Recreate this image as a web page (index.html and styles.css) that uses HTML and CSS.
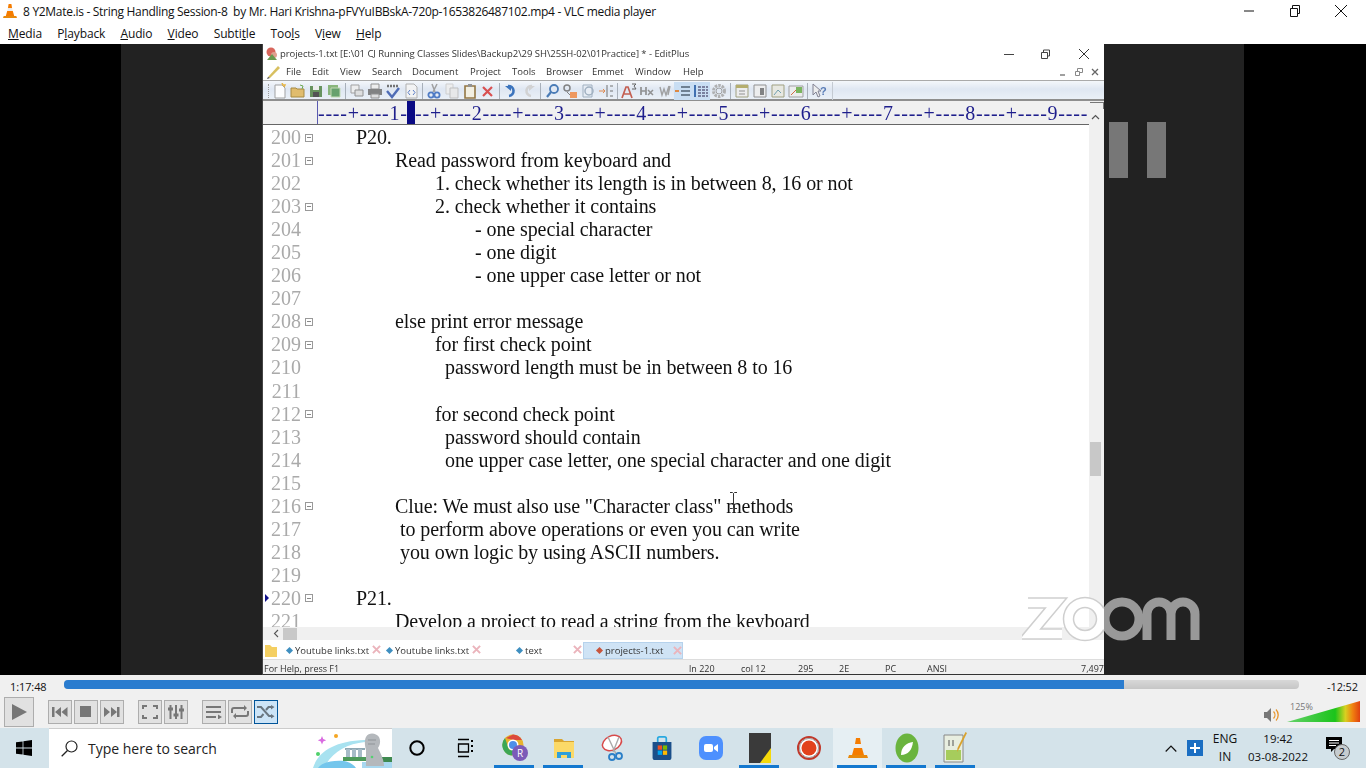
FILE: index.html
```html
<!DOCTYPE html>
<html lang="en">
<head>
<meta charset="utf-8">
<title>VLC media player</title>
<link rel="stylesheet" href="styles.css">
</head>
<body>
<svg class="defs" width="0" height="0" aria-hidden="true">
  <defs>
    <symbol id="cone" viewBox="0 0 20 22">
      <path d="M8 1h4l1 6H7z" fill="#f57c00"/><path d="M7 7h6l1 4H6z" fill="#eee"/><path d="M6 11h8l2 7H4z" fill="#f57c00"/><path d="M1 18h18l1 3H0z" fill="#e8890c"/>
    </symbol>
    <symbol id="tbx" viewBox="0 0 10 10"><path d="M1 1l8 8M9 1L1 9" stroke="#ebb4bc" stroke-width="2.200"/></symbol>
  </defs>
</svg>

<header class="titlebar">
  <svg class="vlc-small"><use href="#cone"/></svg>
  <span class="title-text">8 Y2Mate.is - String Handling Session-8&nbsp; by Mr. Hari Krishna-pFVYuIBBskA-720p-1653826487102.mp4 - VLC media player</span>
  <div class="winbtns">
    <svg width="16" height="16" viewBox="0 0 16 16"><path d="M3 8h10" stroke="#111"/></svg>
    <svg width="16" height="16" viewBox="0 0 16 16"><path d="M3.500 5.500h7v8h-7zM5.500 5.500v-3h7v8h-2" fill="none" stroke="#111"/></svg>
    <svg width="16" height="16" viewBox="0 0 16 16"><path d="M2 2l12 12M14 2L2 14" stroke="#111"/></svg>
  </div>
</header>
<nav class="menubar">
  <span><u>M</u>edia</span><span>P<u>l</u>ayback</span><span><u>A</u>udio</span><span><u>V</u>ideo</span><span>Subti<u>t</u>le</span><span>Too<u>l</u>s</span><span>V<u>i</u>ew</span><span><u>H</u>elp</span>
</nav>

<main class="video">
  <div class="bar-black left"></div>
  <div class="bar-dark left"></div>
  <section class="editplus">
    <div class="ep-title">
      <svg class="ep-logo" width="14" height="14" viewBox="0 0 14 14"><circle cx="6" cy="5" r="4.500" fill="#d8665c"/><circle cx="9" cy="8" r="3" fill="#e0a090"/><path d="M2 13l5-6 5 6z" fill="#6a9a50"/></svg>
      <span class="ep-title-text">projects-1.txt [E:\01 CJ Running Classes Slides\Backup2\29 SH\25SH-02\01Practice] * - EditPlus</span>
      <div class="ep-winbtns">
        <svg width="14" height="14" viewBox="0 0 14 14"><path d="M1 7.500h10" stroke="#444"/></svg>
        <svg width="14" height="14" viewBox="0 0 14 14"><path d="M2.500 5.500h6v6h-6zM4.500 5V3h6v6H9" fill="none" stroke="#444"/></svg>
        <svg width="14" height="14" viewBox="0 0 14 14"><path d="M2 2l10 10M12 2L2 12" stroke="#333"/></svg>
      </div>
    </div>
    <div class="ep-menu">
      <svg class="ep-pencil" width="15" height="15" viewBox="0 0 15 15"><path d="M2 13L12 2l2 2L4 14z" fill="#d8c060"/><path d="M2 13l-1 2 3-1z" fill="#444"/></svg>
      <span class="m-file">File</span><span class="m-edit">Edit</span><span class="m-view">View</span><span class="m-search">Search</span><span class="m-doc">Document</span><span class="m-proj">Project</span><span class="m-tools">Tools</span><span class="m-brow">Browser</span><span class="m-emm">Emmet</span><span class="m-win">Window</span><span class="m-help">Help</span>
      <div class="ep-mdi">
        <svg width="10" height="10" viewBox="0 0 10 10"><path d="M2 8h5" stroke="#777" stroke-width="1.400"/></svg>
        <svg width="10" height="10" viewBox="0 0 10 10"><path d="M1.500 4.500h4v4h-4zM3.500 4V1.500h5v4H6" fill="none" stroke="#888"/></svg>
        <svg width="10" height="10" viewBox="0 0 10 10"><path d="M2 2l6 6M8 2L2 8" stroke="#666" stroke-width="1.300"/></svg>
      </div>
    </div>
    <div class="ep-toolbar">
      <div class="grip"></div>
      <svg class="tool" viewBox="0 0 16 16"><path d="M3 2h7l3 3v10H3z" fill="#fff" stroke="#999"/><path d="M10 0l1 2 2 0-1 2" stroke="#e8b030" fill="none" stroke-width="1.500"/></svg>
      <svg class="tool" viewBox="0 0 16 16"><path d="M1 5h5l1 1h7v8H1z" fill="#e0b860" stroke="#a08030"/><path d="M10 2l3 1-1 3" stroke="#60a040" fill="none"/></svg>
      <svg class="tool" viewBox="0 0 16 16"><path d="M2 3h12v11H2z" fill="#5a8a50"/><path d="M5 3h6v4H5z" fill="#eee"/><path d="M5 9h6v5H5z" fill="#444"/></svg>
      <svg class="tool" viewBox="0 0 16 16"><path d="M2 2h10v10H2z" fill="#80b070"/><path d="M5 5h9v9H5z" fill="#5a9a60" stroke="#c0d8b0"/></svg>
      <i class="sep"></i>
      <svg class="tool" viewBox="0 0 16 16"><path d="M2 2h8v8H2z" fill="#eee" stroke="#999"/><path d="M6 7h8v6H6z" fill="#ddd" stroke="#888"/></svg>
      <svg class="tool" viewBox="0 0 16 16"><path d="M4 1h8v5H4z" fill="#eee" stroke="#888"/><path d="M1 6h14v6H1z" fill="#777"/><path d="M4 11h8v4H4z" fill="#ddd" stroke="#888"/></svg>
      <svg class="tool" viewBox="0 0 16 16"><path d="M2 8l5 6 7-9" fill="none" stroke="#4060b0" stroke-width="2.400"/><path d="M2 3h12" stroke="#666" stroke-width="2.500" stroke-dasharray="2 1"/></svg>
      <svg class="tool" viewBox="0 0 16 16"><path d="M3 1h8l3 3v11H3z" fill="#f4f4f4" stroke="#aaa"/><path d="M7 7L5 9.500 7 12M10 7l2 2.500L10 12" fill="none" stroke="#4a70c0"/></svg>
      <i class="sep"></i>
      <svg class="tool" viewBox="0 0 16 16"><path d="M11 1L7 9M6 1l3 8" stroke="#999" stroke-width="1.500"/><circle cx="5" cy="12" r="2.600" fill="none" stroke="#4070c0" stroke-width="1.800"/><circle cx="11" cy="12" r="2.600" fill="none" stroke="#4070c0" stroke-width="1.800"/></svg>
      <svg class="tool" viewBox="0 0 16 16"><path d="M2 1h7v10H2z" fill="#eee" stroke="#ccc"/><path d="M6 5h8v10H6z" fill="#e8e8e8" stroke="#bbb"/></svg>
      <svg class="tool" viewBox="0 0 16 16"><path d="M3 3h10v12H3z" fill="#f4f0e0" stroke="#8a6a30" stroke-width="1.600"/><path d="M6 1h4v3H6z" fill="#888"/></svg>
      <svg class="tool" viewBox="0 0 16 16"><path d="M3 4l9 9M12 4l-9 9" stroke="#d84040" stroke-width="2.200"/></svg>
      <i class="sep"></i>
      <svg class="tool" viewBox="0 0 16 16"><path d="M5 3a5 5 0 1 1 1 10" fill="none" stroke="#2a68b8" stroke-width="2.600"/><path d="M2 3h6v5z" fill="#2a68b8"/></svg>
      <svg class="tool" viewBox="0 0 16 16"><path d="M11 3a5 5 0 1 0-1 10" fill="none" stroke="#d0d0d0" stroke-width="2.600"/><path d="M14 3H8v5z" fill="#d0d0d0"/></svg>
      <i class="sep"></i>
      <svg class="tool" viewBox="0 0 16 16"><circle cx="10" cy="6" r="4" fill="none" stroke="#3a70b0" stroke-width="1.800"/><path d="M7 9l-4 5" stroke="#3a70b0" stroke-width="2.200"/></svg>
      <svg class="tool" viewBox="0 0 16 16"><circle cx="5" cy="5" r="3" fill="none" stroke="#777" stroke-width="1.500"/><path d="M5 9l3 3" stroke="#777"/><rect x="8" y="9" width="7" height="6" fill="#f09050"/></svg>
      <svg class="tool" viewBox="0 0 16 16"><path d="M3 2h9v12H3z" fill="#e8eef6" stroke="#9ab"/><circle cx="9" cy="8" r="4" fill="none" stroke="#9ab" stroke-width="1.500"/></svg>
      <svg class="tool" viewBox="0 0 16 16"><path d="M1 8h6M5 6l2 2-2 2" stroke="#e08040" fill="none"/><path d="M9 2v12M12 3h3M12 8h3M12 13h3" stroke="#666"/></svg>
      <i class="sep"></i>
      <svg class="tool" viewBox="0 0 16 16"><path d="M1 15L5 4h2l4 11M3 11h6" fill="none" stroke="#c05040" stroke-width="1.700"/><path d="M11 1h4l-2 2 2 3h-4" fill="none" stroke="#555"/></svg>
      <svg class="tool" viewBox="0 0 16 16"><path d="M2 4v8M7 4v8M2 8h5" stroke="#888" stroke-width="1.700"/><path d="M9 7l5 5M14 7l-5 5" stroke="#888" stroke-width="1.500"/></svg>
      <svg class="tool" viewBox="0 0 16 16"><path d="M3 4l2 8 2-6 2 6 3-9M13 3l-2 9" fill="none" stroke="#999" stroke-width="1.400"/></svg>
      <div class="tool-on">
        <svg class="tool" viewBox="0 0 16 16"><path d="M6 4h9M6 8h9M6 12h9" stroke="#456" stroke-width="1.600"/><path d="M0 8h4" stroke="#e08030" stroke-width="2"/></svg>
        <svg class="tool" viewBox="0 0 16 16"><path d="M2 2v12" stroke="#36a" stroke-width="2"/><path d="M5 4h10M5 7h10M5 10h10M5 13h10" stroke="#557" stroke-width="1.700" stroke-dasharray="3 1"/></svg>
      </div>
      <svg class="tool" viewBox="0 0 16 16"><circle cx="8" cy="8" r="5.500" fill="none" stroke="#aaa" stroke-width="3" stroke-dasharray="2.500 1"/><circle cx="8" cy="8" r="3" fill="none" stroke="#999"/></svg>
      <i class="sep"></i>
      <svg class="tool" viewBox="0 0 16 16"><path d="M2 2h12v12H2z" fill="#eee" stroke="#997"/><path d="M2 2h12v3H2z" fill="#b0a860"/><path d="M5 8h6M5 11h6" stroke="#888"/></svg>
      <svg class="tool" viewBox="0 0 16 16"><path d="M2 2h12v12H2z" fill="#eee" stroke="#888"/><path d="M8 5h4v7H8z" fill="#777"/></svg>
      <svg class="tool" viewBox="0 0 16 16"><path d="M2 2h12v12H2z" fill="#e8e8e0" stroke="#997"/><path d="M4 12l4-5 3 3" fill="none" stroke="#69a"/></svg>
      <svg class="tool" viewBox="0 0 16 16"><path d="M1 3h14v11H1z" fill="#eee" stroke="#999"/><path d="M8 4h6v6H8z" fill="#70b050"/><path d="M3 12l5-5" stroke="#d06030"/></svg>
      <i class="sep"></i>
      <svg class="tool" viewBox="0 0 16 16"><path d="M2 1v11l3-3 2 5 2-1-2-5h3z" fill="#eee" stroke="#778"/><text class="help-q" x="9" y="12">?</text></svg>
      <i class="sep last"></i>
    </div>

    <div class="ep-body">
      <div class="ep-main">
        <div class="ruler"><span class="ruler-text">----+----1----+----2----+----3----+----4----+----5----+----6----+----7----+----8----+----9----</span><i class="ruler-caret"></i></div>
        <div class="code">
          <div class="line"><span class="num">200</span><i class="fold"></i><span class="t i0">P20.</span></div>
          <div class="line"><span class="num">201</span><i class="fold"></i><span class="t i1">Read password from keyboard and</span></div>
          <div class="line"><span class="num">202</span><span class="t i2">1. check whether its length is in between 8, 16 or not</span></div>
          <div class="line"><span class="num">203</span><i class="fold"></i><span class="t i2">2. check whether it contains</span></div>
          <div class="line"><span class="num">204</span><span class="t i4">- one special character</span></div>
          <div class="line"><span class="num">205</span><span class="t i4">- one digit</span></div>
          <div class="line"><span class="num">206</span><span class="t i4">- one upper case letter or not</span></div>
          <div class="line"><span class="num">207</span></div>
          <div class="line"><span class="num">208</span><i class="fold"></i><span class="t i1">else print error message</span></div>
          <div class="line"><span class="num">209</span><i class="fold"></i><span class="t i2">for first check point</span></div>
          <div class="line"><span class="num">210</span><span class="t i3">password length must be in between 8 to 16</span></div>
          <div class="line"><span class="num">211</span></div>
          <div class="line"><span class="num">212</span><i class="fold"></i><span class="t i2">for second check point</span></div>
          <div class="line"><span class="num">213</span><span class="t i3">password should contain</span></div>
          <div class="line"><span class="num">214</span><span class="t i3">one upper case letter, one special character and one digit</span></div>
          <div class="line"><span class="num">215</span></div>
          <div class="line"><span class="num">216</span><i class="fold"></i><span class="t i1">Clue: We must also use "Character class" methods</span></div>
          <div class="line"><span class="num">217</span><span class="t i5">to perform above operations or even you can write</span></div>
          <div class="line"><span class="num">218</span><span class="t i5">you own logic by using ASCII numbers.</span></div>
          <div class="line"><span class="num">219</span></div>
          <div class="line"><i class="marker"></i><span class="num">220</span><i class="fold"></i><span class="t i0">P21.</span></div>
          <div class="line"><span class="num">221</span><span class="t i1">Develop a project to read a string from the keyboard</span></div>
          <svg class="ibeam" width="9" height="17" viewBox="0 0 9 17"><path d="M1 .5h2.500l1 1 1-1H8M4.500 1.500v14M1 16.500h2.500l1-1 1 1H8" fill="none" stroke="#333"/></svg>
        </div>
      </div>
      <div class="vscroll">
        <i class="corner"></i>
        <svg class="up" width="9" height="6" viewBox="0 0 9 6"><path d="M1 5l3.500-3.500L8 5" fill="none" stroke="#555" stroke-width="1.200"/></svg>
        <i class="thumb"></i>
      </div>
    </div>
    <div class="hscroll">
      <svg width="6" height="9" viewBox="0 0 6 9"><path d="M5 1L1.500 4.500 5 8" fill="none" stroke="#555" stroke-width="1.100"/></svg>
      <i class="hthumb"></i>
      <svg class="right" width="6" height="9" viewBox="0 0 6 9"><path d="M1 1l3.500 3.500L1 8" fill="none" stroke="#777" stroke-width="1.100"/></svg>
    </div>
    <div class="tabs">
      <svg class="folder" width="12" height="13" viewBox="0 0 12 13"><path d="M0 1h5l2 2h5v10H0z" fill="#f4cf62"/></svg>
      <div class="tab t1"><i class="dia"></i><span>Youtube links.txt</span><svg class="tx"><use href="#tbx"/></svg></div>
      <div class="tab t2"><i class="dia"></i><span>Youtube links.txt</span><svg class="tx"><use href="#tbx"/></svg></div>
      <div class="tab t3"><i class="dia"></i><span>text</span><svg class="tx"><use href="#tbx"/></svg></div>
      <div class="tab t4 on"><i class="dia red"></i><span>projects-1.txt</span><svg class="tx"><use href="#tbx"/></svg></div>
    </div>
    <div class="ep-status">
      <span class="s-help">For Help, press F1</span>
      <span class="s-ln">ln 220</span><span class="s-col">col 12</span><span class="s-n">295</span><span class="s-hex">2E</span><span class="s-pc">PC</span><span class="s-ansi">ANSI</span><span class="s-size">7,497</span>
    </div>
  </section>
  <div class="bar-dark right"></div>
  <div class="bar-black right"></div>

  <i class="pause p1"></i><i class="pause p2"></i>
  <svg class="zoomlogo" width="180" height="48" viewBox="0 0 180 48" aria-label="zoom">
    <defs>
      <clipPath id="zl"><rect x="0" y="0" width="82" height="48"/></clipPath>
      <clipPath id="zr"><rect x="82" y="0" width="98" height="48"/></clipPath>
    </defs>
    <g clip-path="url(#zl)" fill="none">
      <g stroke="#cfcfcf" stroke-width="11.500"><path d="M6 7h28L8 38h32"/><circle cx="63" cy="23" r="16.500"/><circle cx="100" cy="23" r="17"/></g>
      <g stroke="#fff" stroke-width="8.500"><path d="M6 7h28L8 38h32"/><circle cx="63" cy="23" r="16.500"/><circle cx="100" cy="23" r="17"/></g>
    </g>
    <g clip-path="url(#zr)" fill="none" stroke="#999" stroke-width="9">
      <circle cx="100" cy="23" r="17"/>
      <path d="M125 44V18a10 10 0 0 1 24 0v26M149 18a10 10 0 0 1 24 0v26"/>
    </g>
  </svg>
</main>

<section class="controls">
  <div class="seekrow">
    <span class="time">1:17:48</span>
    <div class="seek"><div class="seek-fill"></div></div>
    <span class="time remain">-12:52</span>
  </div>
  <div class="btnrow">
    <button class="btn big"><svg width="18" height="18" viewBox="0 0 18 18"><path d="M2 1l15 8-15 8z" fill="#777"/></svg></button>
    <div class="group g1">
      <button class="btn"><svg width="16" height="12" viewBox="0 0 16 12"><path d="M0 1h2.500v10H0zM9 1v10L3 6zM15.500 1v10l-6-5z" fill="#777"/></svg></button>
      <button class="btn"><svg width="12" height="12" viewBox="0 0 12 12"><rect width="11" height="11" fill="#777"/></svg></button>
      <button class="btn"><svg width="16" height="12" viewBox="0 0 16 12"><path d="M0 1v10l6-5zM7 1v10l6-5zM13 1h2.500v10H13z" fill="#777"/></svg></button>
    </div>
    <div class="group g2">
      <button class="btn"><svg width="16" height="14" viewBox="0 0 16 14" fill="none" stroke="#777" stroke-width="2"><path d="M1 4V1h4M11 1h4v3M15 10v3h-4M5 13H1v-3"/></svg></button>
      <button class="btn"><svg width="16" height="14" viewBox="0 0 16 14" fill="none" stroke="#777" stroke-width="2"><path d="M2.500 0v14M8 0v14M13.500 0v14"/><path d="M0 4h5M5.500 10h5M11 5h5" stroke-width="3"/></svg></button>
    </div>
    <div class="group g3">
      <button class="btn"><svg width="16" height="14" viewBox="0 0 16 14"><path d="M0 1h15v2H0zM0 6h15v2H0zM0 11h10v2H0zM12 9.500l4 2.500-4 2.500z" fill="#777"/></svg></button>
      <button class="btn"><svg width="18" height="14" viewBox="0 0 18 14" fill="none" stroke="#777" stroke-width="2"><path d="M1 8V5a2 2 0 0 1 2-2h11M17 6v3a2 2 0 0 1-2 2H4"/><path d="M13 0l3 3-3 3zM5 8l-3 3 3 3z" fill="#777" stroke="none"/></svg></button>
      <button class="btn sel"><svg width="18" height="14" viewBox="0 0 18 14" fill="none" stroke="#6a7680" stroke-width="2"><path d="M0 2h4l8 9h3M0 12h4l2.500-3M9 5l2.500-3H15"/><path d="M14 0v4.500l3.500-2.500zM14 9v4.500l3.500-2.300z" fill="#6a7680" stroke="none"/></svg></button>
    </div>
    <div class="volume">
      <svg width="17" height="14" viewBox="0 0 17 14"><path d="M0 4h3l4-4v14l-4-4H0z" fill="#777"/><path d="M9.500 3.500a5 5 0 0 1 0 7M12 1.500a8 8 0 0 1 0 11" fill="none" stroke="#e8962c" stroke-width="1.300"/></svg>
      <div class="vol-meter"><span class="vol-label">125%</span><i class="vol-shape"></i></div>
    </div>
  </div>
</section>

<footer class="taskbar">
  <svg class="winlogo" width="16" height="16" viewBox="0 0 16 16"><path d="M0 2.300l6.600-.9v6.200H0zM7.400 1.300L16 0v7.600H7.400zM0 8.400h6.600v6.200L0 13.700zM7.400 8.400H16V16l-8.600-1.200z" fill="#000"/></svg>
  <div class="search">
    <svg width="17" height="17" viewBox="0 0 17 17"><circle cx="10.500" cy="6.500" r="5.500" fill="none" stroke="#222" stroke-width="1.200"/><path d="M6.500 10.500L.7 16.300" stroke="#222" stroke-width="1.300"/></svg>
    <span>Type here to search</span>
    <svg class="promo" width="82" height="39" viewBox="0 1 82 39">
      <path d="M12 8l1.200 3 3 1.200-3 1.200L12 16.500l-1.200-3-3-1.200 3-1.200z" fill="#d96be0"/>
      <circle cx="26" cy="8" r="2" fill="#f5a623"/><circle cx="8" cy="26" r="2" fill="#4fd06b"/>
      <path d="M3 40C8 24 24 13 55 12v2C36 16 22 24 14 40z" fill="#a8e2f0"/>
      <path d="M8 40c4-6 16-8 26-7 6 1 10 4 12 7z" fill="#74c6ec"/>
      <path d="M35 20h20v2H35z" fill="#8fa8b4"/>
      <path d="M36 21h4v9h-4zM42 21h4v9h-4zM48 21h4v9h-4z" fill="#a7bcc8"/>
      <path d="M33 29h26v4H33z" fill="#4d9a5a"/>
      <path d="M72 29h10v5H72z" fill="#3f8a50"/>
      <path d="M52 40h30v-6H52z" fill="#a8d8f0"/>
      <path d="M56 38V22c-1-4-2-9 0-13 3-5 10-4 13 0 2 4 1 8-1 11 3 6 6 12 6 18z" fill="#b4b8bc"/>
      <path d="M58 12h8M58 16h7" stroke="#8f9498"/>
      <circle cx="62" cy="29" r="1.300" fill="#55d070"/>
    </svg>
  </div>
  <div class="tasks">
    <div class="task"><svg width="20" height="20" viewBox="0 0 20 20"><circle cx="10" cy="10" r="6.700" fill="none" stroke="#000" stroke-width="2"/></svg></div>
    <div class="task"><svg width="18" height="20" viewBox="0 0 18 20" fill="none" stroke="#000" stroke-width="1.300"><path d="M1 1.500h11M1 18.500h11M1.500 6h10v8h-10z"/><path d="M15 2v2M15 7v2M15 12v2" stroke-width="2"/></svg></div>
    <div class="task open"><svg width="28" height="30" viewBox="0 0 28 30"><circle cx="12" cy="12" r="10.500" fill="#e8b32e"/><path d="M12 1.500a10.500 10.500 0 0 1 9 5.500H12L5 5z" fill="#dc4a3c"/><path d="M4 5a10.500 10.500 0 0 0 7 17.500l4-6H8z" fill="#3da754"/><circle cx="12" cy="12" r="5.500" fill="#fff"/><circle cx="12" cy="12" r="4" fill="#4e8fe8"/><circle cx="19" cy="20" r="8" fill="#7c5bb8"/><text class="avatar" x="19" y="24">R</text></svg></div>
    <div class="task open"><svg width="22" height="20" viewBox="0 0 22 20"><path d="M1 1h8l2 2h10v17H1z" fill="#d9a530"/><path d="M1 4h20v16H1z" fill="#fbd968"/><path d="M4 14h14v6h-4v-3H8v3H4z" fill="#2f9fdc"/></svg></div>
    <div class="task"><svg width="26" height="28" viewBox="0 0 26 28"><ellipse cx="12" cy="9" rx="10" ry="7" fill="#fff" stroke="#d84a4a" stroke-width="1.500" transform="rotate(-25 12 9)"/><path d="M8 3l8 17M19 3l-6 15" stroke="#aaa" stroke-width="1.400"/><circle cx="12" cy="23" r="3" fill="none" stroke="#2a7fc8" stroke-width="1.800"/><circle cx="19" cy="22" r="3" fill="none" stroke="#2a7fc8" stroke-width="1.800"/></svg></div>
    <div class="task"><svg width="24" height="24" viewBox="0 0 24 28"><path d="M7 7V3a2 2 0 0 1 2-2h6a2 2 0 0 1 2 2v4" fill="none" stroke="#29a9e0" stroke-width="2"/><path d="M1 7h22v18a3 3 0 0 1-3 3H4a3 3 0 0 1-3-3z" fill="#1b4f8a"/><rect x="7" y="11" width="5" height="5" fill="#f25022"/><rect x="13" y="11" width="5" height="5" fill="#7fba00"/><rect x="7" y="17" width="5" height="5" fill="#00a4ef"/><rect x="13" y="17" width="5" height="5" fill="#ffb900"/></svg></div>
    <div class="task"><svg width="24" height="24" viewBox="0 0 24 24"><rect width="24" height="24" rx="7" fill="#4d90fe"/><rect x="5" y="8" width="9" height="8" rx="2" fill="#fff"/><path d="M15 11l4-3v8l-4-3z" fill="#fff"/></svg></div>
    <div class="task open"><svg width="22" height="30" viewBox="0 0 22 30"><rect width="22" height="30" fill="#3a3a3a"/><path d="M22 15v15H11z" fill="#f5d90a"/></svg></div>
    <div class="task"><svg width="24" height="26" viewBox="0 0 24 26"><circle cx="12" cy="13" r="11" fill="#fff" stroke="#c0392b" stroke-width="2"/><circle cx="12" cy="13" r="7.500" fill="#e2421c"/><circle cx="12" cy="13" r="9.500" fill="none" stroke="#999"/></svg></div>
    <div class="task active open"><svg width="20" height="30" viewBox="0 0 20 22"><use href="#cone"/></svg></div>
    <div class="task open"><svg width="24" height="30" viewBox="0 0 24 30"><ellipse cx="12" cy="15" rx="11.500" ry="14.500" fill="#6ab43e"/><path d="M6 22c0-8 5-12 12-13-1 8-5 13-12 13z" fill="#fff"/></svg></div>
    <div class="task open"><svg width="26" height="32" viewBox="0 0 26 32"><path d="M1 3h19v27H1z" fill="#e8eee0" stroke="#888"/><path d="M3 18h15v10H3z" fill="#a6cc5c"/><path d="M6 8v6M10 8v6" stroke="#555"/><path d="M24 1l-8 16-2 3 .5-4 8-16z" fill="#d9a22c"/></svg></div>
  </div>
  <div class="tray">
    <svg class="caret" width="12" height="7" viewBox="0 0 12 7"><path d="M.7 6.500L6 1l5.300 5.500" fill="none" stroke="#111" stroke-width="1.200"/></svg>
    <div class="plus"><svg width="10" height="10" viewBox="0 0 10 10"><path d="M5 0v10M0 5h10" stroke="#fff" stroke-width="2"/></svg></div>
    <div class="lang"><span>ENG</span><span>IN</span></div>
    <div class="clock"><span>19:42</span><span>03-08-2022</span></div>
    <div class="notif">
      <svg width="16" height="15" viewBox="0 0 16 15"><path d="M0 0h16v12H8l-3 3v-3H0z" fill="#000"/><path d="M3 3.500h10M3 6h10M3 8.500h7" stroke="#fff"/></svg>
      <span class="badge">2</span>
    </div>
  </div>
</footer>
</body>
</html>
```

FILE: styles.css
```css
* { box-sizing: border-box; }
html, body { margin: 0; padding: 0; }
body {
  width: 1366px; height: 768px; overflow: hidden; background: #fff;
  font-family: "Open Sans", "Noto Sans", sans-serif; color: #111;
  position: relative;
}
.defs { position: absolute; }
i { display: block; }

/* VLC window chrome */
.titlebar { height: 22px; display: flex; align-items: center; background: #fff; padding-left: 3px; }
.vlc-small { width: 14px; height: 16px; flex: none; margin-right: 6px; }
.title-text { font-size: 12px; letter-spacing: -.3px; white-space: nowrap; }
.winbtns { margin-left: auto; display: flex; gap: 30px; padding-right: 17px; }
.winbtns svg { display: block; }
.menubar { height: 22px; display: flex; align-items: center; padding-left: 8px; gap: 15.200px; font-size: 12px; background: #fff; letter-spacing: -.01em; }

/* Video */
.video { height: 631px; display: flex; background: #000; position: relative; }
.bar-black.left { width: 121px; }
.bar-black.right { width: 122px; }
.bar-dark { background: #222; }
.bar-dark.left { width: 141px; }
.bar-dark.right { width: 140px; }
.pause { position: absolute; top: 78px; width: 19px; height: 56px; background: #777; }
.p1 { left: 1109px; }
.p2 { left: 1147px; }
.zoomlogo { position: absolute; left: 1022px; top: 552px; }

/* EditPlus window */
.editplus { width: 842px; display: flex; flex-direction: column; background: #fff; border-left: 1px solid #444; filter: blur(.4px); }
.ep-title { height: 19px; display: flex; align-items: center; padding-left: 2px; font-size: 9.500px; color: #333; }
.ep-logo { margin-right: 1px; flex: none; }
.ep-title-text { white-space: nowrap; letter-spacing: -.05px; }
.ep-winbtns { margin-left: auto; display: flex; gap: 24px; padding-right: 13px; }
.ep-winbtns svg { display: block; }
.ep-winbtns svg:first-child { margin-right: -2px; }
.ep-menu { height: 17px; display: flex; align-items: center; padding-left: 3px; font-size: 9.500px; color: #333; position: relative; }
.ep-menu > span { position: absolute; top: 2px; }
.m-file { left: 23px; } .m-edit { left: 49px; } .m-view { left: 77px; } .m-search { left: 109px; }
.m-doc { left: 149px; } .m-proj { left: 207px; } .m-tools { left: 249px; } .m-brow { left: 283px; }
.m-emm { left: 329px; } .m-win { left: 372px; } .m-help { left: 420px; }
.ep-mdi { margin-left: auto; display: flex; gap: 6px; padding-right: 4px; }
.ep-mdi svg { display: block; }

.ep-toolbar { height: 21px; display: flex; align-items: center; padding: 1px 0 0 5px; background: linear-gradient(#f4f7fb, #dfe7f2 45%, #eaf0f7); border-top: 1px solid #aaa; border-bottom: 2px solid #8e8e8e; }
.grip { width: 2px; height: 14px; border-left: 1px dotted #999; margin-right: 1px; }
.tool { width: 16px; height: 16px; flex: none; margin: 0 1px; opacity: .9; }
.tool-on { display: flex; height: 18px; align-items: center; background: #c9def3; }
.sep { width: 1px; height: 16px; background: #a8b0ba; margin: 0 2px; flex: none; }
.sep.last { margin-left: 4px; background: #c4cad2; height: 18px; }
.help-q { font: bold 11px "Liberation Sans", sans-serif; fill: #4a70b0; }

.ep-body { height: 526px; display: flex; }
.ep-main { width: 826px; display: flex; flex-direction: column; }
.ruler { height: 24px; background: #f0f0f0; border-bottom: 1.500px solid #666; padding-left: 54px; position: relative; overflow: hidden; }
.ruler-text { display: block; height: 23px; border-left: 1px solid #5a5ab0; font: 20px/25px "Liberation Serif", serif; color: #1e1e8c; white-space: nowrap; letter-spacing: .77px; }
.ruler-caret { position: absolute; left: 144px; top: 0; width: 8px; height: 23px; background: #0a0a84; }
.code { height: 502px; overflow: hidden; position: relative; background: #fff; padding-top: 1px; }
.line { height: 23.050px; display: grid; grid-template-columns: 38px 12px 1fr; align-items: center; font: 20px/23px "Liberation Serif", serif; color: #111; white-space: nowrap; position: relative; }
.num { grid-column: 1; text-align: right; color: #aaa; }
.fold { grid-column: 2; width: 8px; height: 8px; margin-left: 4px; border: 1px solid #999; position: relative; }
.fold::after { content: ""; position: absolute; left: 1px; right: 1px; top: 2.500px; height: 1px; background: #888; }
.t { grid-column: 3; letter-spacing: -.09px; }
.i0 { padding-left: 43px; } .i1 { padding-left: 82px; } .i2 { padding-left: 122px; }
.i3 { padding-left: 132px; } .i4 { padding-left: 162px; } .i5 { padding-left: 87px; }
.marker { position: absolute; left: 2px; top: 7px; border-left: 4px solid #10108a; border-top: 4px solid transparent; border-bottom: 4px solid transparent; }
.ibeam { position: absolute; left: 466px; top: 367px; }

.vscroll { width: 15px; background: #f0f0f0; position: relative; }
.corner { position: absolute; left: 1px; top: 1px; right: 0; height: 7px; border-top: 1px solid #777; border-right: 1px solid #777; }
.up { position: absolute; left: 2px; top: 13px; }
.thumb { position: absolute; left: 1px; top: 341px; width: 11px; height: 34px; background: #c8c8c8; }
.hscroll { height: 13px; background: #f0f0f0; display: flex; align-items: center; padding-left: 10px; position: relative; }
.hscroll svg { display: block; }
.hthumb { width: 14px; height: 12px; background: #c8c8c8; margin-left: 4px; }
.hscroll .right { margin-left: 779px; }
.tabs { height: 20px; display: flex; align-items: center; background: #fff; font-size: 9.500px; color: #333; padding: 1px 0 0 2px; position: relative; border-bottom: 1px solid #ddd; }
.folder { flex: none; }
.tab { height: 17px; display: flex; align-items: center; flex: none; white-space: nowrap; position: relative; }
.tab span { margin-left: 3px; }
.dia { width: 5px; height: 5px; transform: rotate(45deg); background: #3f8fc0; flex: none; }
.dia.red { background: #c8553d; }
.tx { width: 9px; height: 9px; position: absolute; top: 3px; }
.t1 { width: 100px; margin-left: 10px; } .t1 .tx { left: 85px; }
.t2 { width: 130px; } .t2 .tx { left: 85px; }
.t3 { width: 66px; } .t3 .tx { left: 56px; }
.t4 { width: 100px; padding-left: 13px; background: #cfe3f5; border: 1px solid #b6d2ec; }
.t4 .tx { left: 89px; }
.ep-status { height: 15px; background: #f0f0f0; border-bottom: 1px solid #333; font-size: 9px; color: #333; position: relative; display: flex; align-items: center; padding: 2px 0 0 1px; }
.s-help { width: 425px; }
.s-ln { width: 52px; } .s-col { width: 57px; } .s-n { width: 41px; } .s-hex { width: 46px; } .s-pc { width: 42px; } .s-ansi { width: 60px; }
.s-size { margin-left: auto; }

/* Playback controls */
.controls { height: 53px; background: #f0f0f0; }
.seekrow { height: 20px; display: flex; align-items: center; position: relative; }
.time { font-size: 11px; color: #111; white-space: nowrap; padding-top: 2px; letter-spacing: -.1px; }
.seekrow > .time:first-child { width: 64px; padding-left: 10px; }
.seek { width: 1235px; height: 9px; background: linear-gradient(#d8d8d8, #c6c6c6); border-radius: 4px; overflow: hidden; margin-top: -1px; }
.seek-fill { width: 1060px; height: 100%; background: #2a7ccf; }
.remain { margin-left: 28px; }
.btnrow { height: 33px; display: flex; align-items: center; padding-left: 4px; position: relative; }
.btn { width: 24px; height: 24px; padding: 0; display: flex; align-items: center; justify-content: center; background: #e1e1e1; border: 1px solid #adadad; }
.btn.big { width: 30px; height: 30px; }
.btn.sel { background: #cce4f7; border-color: #005499; }
.group { display: flex; gap: 2px; }
.g1 { margin-left: 14px; }
.g2 { margin-left: 14px; }
.g3 { margin-left: 14px; }
.volume { margin-left: auto; display: flex; align-items: flex-end; gap: 6px; padding-right: 6px; }
.vol-meter { width: 73px; height: 21px; position: relative; }
.vol-label { position: absolute; left: 3px; top: -1px; font-size: 9px; color: #777; z-index: 1; }
.vol-shape { width: 100%; height: 100%; clip-path: polygon(0 100%, 100% 0, 100% 100%); background: linear-gradient(90deg, #66d16a 0%, #1bc41b 66%, #d8d020 80%, #f08010 90%, #e04010 100%); }

/* Taskbar */
.taskbar { height: 40px; background: #d4e3ea; display: flex; align-items: center; position: relative; }
.winlogo { margin-left: 16px; flex: none; }
.search { width: 343px; height: 40px; margin-left: 17px; background: #fff; display: flex; align-items: center; padding-left: 12px; font-size: 14px; position: relative; border-top: 1px solid #ccc; }
.search span { margin-left: 10px; color: #222; }
.promo { position: absolute; right: 0; top: 0; }
.tasks { display: flex; }
.task { width: 49px; height: 40px; display: flex; align-items: center; justify-content: center; position: relative; }
.task.open::after { content: ""; position: absolute; left: 4px; right: 5px; bottom: 0; height: 3px; background: #1378cf; }
.task.active { background: #e6eff3; }
.avatar { font: 10px "Open Sans", sans-serif; fill: #fff; text-anchor: middle; }
.tray { margin-left: auto; display: flex; align-items: center; height: 40px; font-size: 12px; }
.caret { margin-right: 10px; }
.plus { width: 16px; height: 16px; background: #1b6ec2; display: flex; align-items: center; justify-content: center; }
.lang { display: flex; flex-direction: column; align-items: center; gap: 2px; width: 44px; line-height: 16px; }
.clock { display: flex; flex-direction: column; align-items: center; gap: 2px; width: 76px; margin-left: -7px; line-height: 16px; font-size: 11.500px; }
.notif { width: 32px; margin-left: 2px; margin-right: 16px; height: 30px; position: relative; padding: 4px 0 0 8px; }
.notif svg { display: block; }
.badge { position: absolute; left: 16px; top: 11px; width: 16px; height: 16px; border-radius: 50%; background: #c6cccf; border: 1px solid #666; font-size: 11px; line-height: 14px; text-align: center; }
```
